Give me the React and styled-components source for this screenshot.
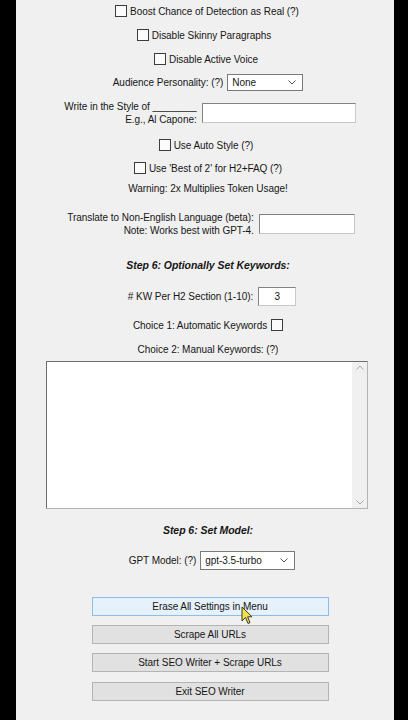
import React from 'react';
import styled, { createGlobalStyle } from 'styled-components';

const GlobalStyle = createGlobalStyle`
  html, body {
    margin: 0;
    padding: 0;
    background: #000;
  }
  body {
    font-family: 'Liberation Sans', Arial, sans-serif;
  }
`;

const Screen = styled.div`
  width: 408px;
  height: 720px;
  background: #000;
  display: flex;
  justify-content: flex-start;
  overflow: hidden;
  position: relative;
`;

const Panel = styled.div`
  margin-left: 16px;
  width: 378px;
  height: 720px;
  background: #f0f0f0;
  display: flex;
  flex-direction: column;
  align-items: center;
  padding-left: 6px;
  box-sizing: border-box;
  color: #161616;
  font-size: 10px;
  letter-spacing: -0.05px;
`;

// $dx nudges a centred row sideways (margin on one side shifts the centre by half)
const Row = styled.div`
  margin-top: ${({ $mt }) => $mt}px;
  margin-left: ${({ $dx }) => ($dx ?? 0) * 2}px;
  height: ${({ $h }) => $h}px;
  display: flex;
  align-items: center;
  justify-content: center;
  gap: ${({ $gap }) => $gap ?? 4}px;
  white-space: nowrap;
`;

const Box = styled.span`
  width: 10px;
  height: 10px;
  border: 1px solid #3c3c3c;
  background: #fbfbfb;
  flex: none;
`;

const Heading = styled.div`
  margin-top: ${({ $mt }) => $mt}px;
  height: 16px;
  line-height: 16px;
  font-weight: bold;
  font-style: italic;
  font-size: 10.5px;
`;

const Stack = styled.div`
  display: flex;
  flex-direction: column;
  align-items: flex-end;
  line-height: 13px;
`;

const Field = styled.div`
  width: ${({ $w }) => $w}px;
  height: ${({ $h }) => $h}px;
  box-sizing: border-box;
  background: #fff;
  border: 1px solid #828282;
  border-bottom-color: #c8c8c8;
  border-right-color: #c8c8c8;
  display: flex;
  align-items: center;
  justify-content: ${({ $center }) => ($center ? 'center' : 'flex-start')};
`;

const Select = styled.div`
  width: ${({ $w }) => $w}px;
  height: ${({ $h }) => $h}px;
  box-sizing: border-box;
  background: #fff;
  border: 1px solid #7a7a7a;
  display: flex;
  align-items: center;
  justify-content: space-between;
  padding: 0 6px 0 4px;
  font-size: 10px;
`;

const TextArea = styled.div`
  margin-top: 4px;
  margin-left: -2px;
  width: 322px;
  height: 148px;
  box-sizing: border-box;
  background: #fff;
  border: 1px solid #6e6e6e;
  border-right-color: #b4b4b4;
  border-bottom-color: #b4b4b4;
  display: flex;
  justify-content: flex-end;
`;

const ScrollBar = styled.div`
  width: 15px;
  background: #f0f0f0;
  display: flex;
  flex-direction: column;
  justify-content: space-between;
  align-items: center;
  padding: 3px 0;
`;

const Button = styled.div`
  margin-top: ${({ $mt }) => $mt}px;
  margin-left: 4px;
  width: 237px;
  height: 19px;
  box-sizing: border-box;
  display: flex;
  align-items: center;
  justify-content: center;
  background: ${({ $hover }) => ($hover ? '#e5f1fb' : '#e1e1e1')};
  border: 1px solid ${({ $hover }) => ($hover ? '#8fbce9' : '#b4b4b4')};
  font-size: 10px;
`;

const Cursor = styled.svg`
  position: absolute;
  left: 241px;
  top: 606px;
`;

const Chevron = ({ color = '#555' }) => (
  <svg width="8" height="5" viewBox="0 0 8 5">
    <path d="M0.5 0.5 L4 4 L7.5 0.5" fill="none" stroke={color} strokeWidth="1" />
  </svg>
);

const CheckRow = ({ mt, dx, children }) => (
  <Row $mt={mt} $h={20} $gap={3} $dx={dx}>
    <Box />
    <span>{children}</span>
  </Row>
);

export default function App() {
  return (
    <Screen>
      <GlobalStyle />
      <Panel>
        <CheckRow mt={1} dx={-1}>Boost Chance of Detection as Real (?)</CheckRow>
        <CheckRow mt={4} dx={-4}>Disable Skinny Paragraphs</CheckRow>
        <CheckRow mt={4} dx={-2}>Disable Active Voice</CheckRow>
        <Row $mt={4} $h={18} $gap={4}>
          <span>Audience Personality: (?)</span>
          <Select $w={76} $h={17}>
            <span>None</span>
            <Chevron />
          </Select>
        </Row>
        <Row $mt={10} $h={24} $gap={5} $dx={2}>
          <Stack>
            <span>Write in the Style of ________</span>
            <span>E.g., Al Capone:</span>
          </Stack>
          <Field $w={154} $h={20} />
        </Row>
        <CheckRow mt={10} dx={-2}>Use Auto Style (?)</CheckRow>
        <CheckRow mt={3}>Use 'Best of 2' for H2+FAQ (?)</CheckRow>
        <Row $mt={3} $h={14}>
          <span>Warning: 2x Multiplies Token Usage!</span>
        </Row>
        <Row $mt={16} $h={26} $gap={5} $dx={3}>
          <Stack>
            <span>Translate to Non-English Language (beta):</span>
            <span>Note: Works best with GPT-4.</span>
          </Stack>
          <Field $w={96} $h={20} />
        </Row>
        <Heading $mt={20}>Step 6: Optionally Set Keywords:</Heading>
        <Row $mt={13} $h={20} $gap={5} $dx={4}>
          <span># KW Per H2 Section (1-10):</span>
          <Field $w={38} $h={19} $center>3</Field>
        </Row>
        <Row $mt={11} $h={16} $gap={4}>
          <span>Choice 1: Automatic Keywords</span>
          <Box />
        </Row>
        <Row $mt={8} $h={16}>
          <span>Choice 2: Manual Keywords: (?)</span>
        </Row>
        <TextArea>
          <ScrollBar>
            <svg width="8" height="5" viewBox="0 0 8 5">
              <path d="M0.5 4.5 L4 1 L7.5 4.5" fill="none" stroke="#a8a8a8" strokeWidth="1" />
            </svg>
            <Chevron color="#a8a8a8" />
          </ScrollBar>
        </TextArea>
        <Heading $mt={13}>Step 6: Set Model:</Heading>
        <Row $mt={13} $h={19} $gap={4} $dx={4}>
          <span>GPT Model: (?)</span>
          <Select $w={95} $h={19}>
            <span>gpt-3.5-turbo</span>
            <Chevron />
          </Select>
        </Row>
        <Button $mt={27} $hover>Erase All Settings in Menu</Button>
        <Button $mt={9}>Scrape All URLs</Button>
        <Button $mt={9}>Start SEO Writer + Scrape URLs</Button>
        <Button $mt={10}>Exit SEO Writer</Button>
      </Panel>
      <Cursor width="12" height="19" viewBox="0 0 12 19">
        <path d="M1 1 L1 15 L4.5 11.5 L7 17.5 L9 16.6 L6.6 10.8 L11 10.8 Z" fill="#f3e24c" stroke="#3a3a20" strokeWidth="1" strokeLinejoin="round" />
      </Cursor>
    </Screen>
  );
}
